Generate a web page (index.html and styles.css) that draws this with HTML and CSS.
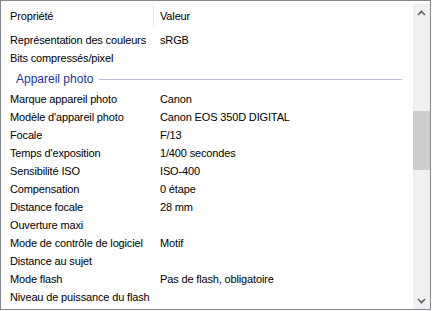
FILE: index.html
```html
<!DOCTYPE html>
<html lang="fr">
<head>
  <meta charset="UTF-8">
  <title>Détails</title>
  <link rel="stylesheet" href="styles.css">
</head>
<body>
  <div class="window">
    <div class="list">
      <div class="header">
        <div class="col-name">Propriété</div>
        <div class="col-value">Valeur</div>
      </div>
      <div class="row"><div class="name">Représentation des couleurs</div><div class="value">sRGB</div></div>
      <div class="row"><div class="name">Bits compressés/pixel</div><div class="value"></div></div>
      <div class="group"><span>Appareil photo</span><div class="rule"></div></div>
      <div class="row"><div class="name">Marque appareil photo</div><div class="value">Canon</div></div>
      <div class="row"><div class="name">Modèle d'appareil photo</div><div class="value">Canon EOS 350D DIGITAL</div></div>
      <div class="row"><div class="name">Focale</div><div class="value">F/13</div></div>
      <div class="row"><div class="name">Temps d'exposition</div><div class="value">1/400 secondes</div></div>
      <div class="row"><div class="name">Sensibilité ISO</div><div class="value">ISO-400</div></div>
      <div class="row"><div class="name">Compensation</div><div class="value">0 étape</div></div>
      <div class="row"><div class="name">Distance focale</div><div class="value">28 mm</div></div>
      <div class="row"><div class="name">Ouverture maxi</div><div class="value"></div></div>
      <div class="row"><div class="name">Mode de contrôle de logiciel</div><div class="value">Motif</div></div>
      <div class="row"><div class="name">Distance au sujet</div><div class="value"></div></div>
      <div class="row"><div class="name">Mode flash</div><div class="value">Pas de flash, obligatoire</div></div>
      <div class="row"><div class="name">Niveau de puissance du flash</div><div class="value"></div></div>
    </div>
    <div class="scrollbar">
      <div class="arrow">
        <svg width="9" height="6" viewBox="0 0 9 6"><path d="M1 5 L4.5 1.5 L8 5" fill="none" stroke="#606060" stroke-width="1.6"/></svg>
      </div>
      <div class="track">
        <div class="thumb"></div>
      </div>
      <div class="arrow">
        <svg width="9" height="6" viewBox="0 0 9 6"><path d="M1 1 L4.5 4.5 L8 1" fill="none" stroke="#606060" stroke-width="1.6"/></svg>
      </div>
    </div>
  </div>
</body>
</html>
```

FILE: styles.css
```css
body {
  margin: 0;
  background: #ffffff;
  font-family: "Liberation Sans", Arial, sans-serif;
  font-size: 11px;
  color: #000000;
}
.window {
  display: flex;
  width: 429px;
  height: 308px;
  border: 1px solid #828790;
  background: #ffffff;
}
.list {
  flex: 1;
  overflow: hidden;
  letter-spacing: -0.15px;
}
.header {
  display: flex;
  height: 30px;
  align-items: center;
}
.col-name {
  width: 143px;
  padding-left: 9px;
  height: 22px;
  line-height: 22px;
  border-right: 1px solid #e5e5e5;
}
.col-value {
  padding-left: 6px;
}
.row {
  display: flex;
  height: 18px;
  line-height: 18px;
}
.name {
  width: 150px;
  padding-left: 9px;
  white-space: nowrap;
}
.value {
  white-space: nowrap;
}
.group {
  display: flex;
  align-items: center;
  height: 23px;
  padding-left: 15px;
  padding-right: 11px;
  color: #2233a6;
  font-size: 12px;
  letter-spacing: 0;
}
.rule {
  flex: 1;
  height: 1px;
  margin-left: 6px;
  margin-top: 2px;
  background: #b6bcd6;
}
.scrollbar {
  width: 17px;
  margin-top: 3px;
  background: #f0f0f0;
  display: flex;
  flex-direction: column;
}
.arrow {
  height: 17px;
  display: flex;
  align-items: center;
  justify-content: center;
}
.track {
  flex: 1;
  padding-top: 90px;
}
.thumb {
  height: 59px;
  background: #cdcdcd;
}
```
